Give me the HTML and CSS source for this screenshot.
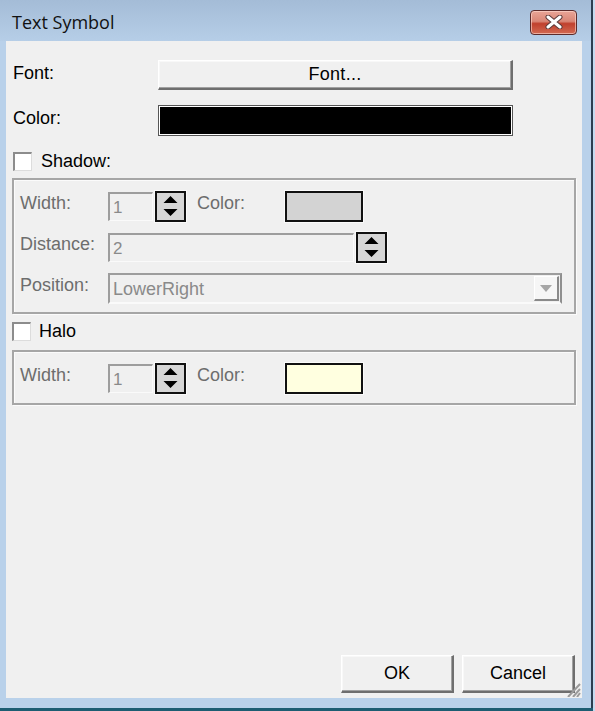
FILE: index.html
```html
<!DOCTYPE html>
<html>
<head>
<meta charset="utf-8">
<title>Text Symbol</title>
<link rel="stylesheet" href="styles.css">
</head>
<body>
<div class="window">
  <div class="titlebar">
    <span class="title">Text Symbol</span>
    <button class="close" aria-label="Close">
      <svg width="20" height="14" viewBox="0 0 20 14">
        <path d="M4 2 L16 12 M16 2 L4 12" stroke="#5a3a3a" stroke-width="5" stroke-linecap="round"/>
        <path d="M4 2 L16 12 M16 2 L4 12" stroke="#ffffff" stroke-width="3" stroke-linecap="round"/>
      </svg>
    </button>
  </div>
  <div class="frame">
    <div class="client">
      <div class="toprows">
        <span class="lbl">Font:</span>
        <button class="btn fontbtn">Font...</button>
        <span class="lbl">Color:</span>
        <div class="colorbox"></div>
      </div>

      <div class="check shadow-check"><span class="cb"></span><span>Shadow:</span></div>

      <div class="group g1">
        <div class="grow">
          <span class="glbl">Width:</span>
          <div class="input small">1</div>
          <div class="spin">
            <svg width="31" height="31" viewBox="0 0 31 31"><path d="M8.5 12 L15.5 5 L22.5 12 Z M8.5 18 L22.5 18 L15.5 25 Z" fill="#000"/></svg>
          </div>
          <span class="glbl clr">Color:</span>
          <div class="swatch grey"></div>
        </div>
        <div class="grow">
          <span class="glbl">Distance:</span>
          <div class="input wide">2</div>
          <div class="spin">
            <svg width="31" height="31" viewBox="0 0 31 31"><path d="M8.5 12 L15.5 5 L22.5 12 Z M8.5 18 L22.5 18 L15.5 25 Z" fill="#000"/></svg>
          </div>
        </div>
        <div class="grow">
          <span class="glbl">Position:</span>
          <div class="combo">
            <span class="combo-text">LowerRight</span>
            <span class="drop">
              <svg width="12" height="7" viewBox="0 0 12 7"><path d="M0 0 L12 0 L6 7 Z" fill="#a6a6a6"/></svg>
            </span>
          </div>
        </div>
      </div>

      <div class="check halo-check"><span class="cb"></span><span>Halo</span></div>

      <div class="group g2">
        <div class="grow">
          <span class="glbl">Width:</span>
          <div class="input small">1</div>
          <div class="spin">
            <svg width="31" height="31" viewBox="0 0 31 31"><path d="M8.5 12 L15.5 5 L22.5 12 Z M8.5 18 L22.5 18 L15.5 25 Z" fill="#000"/></svg>
          </div>
          <span class="glbl clr">Color:</span>
          <div class="swatch yellow"></div>
        </div>
      </div>

      <div class="spacer"></div>

      <div class="buttons">
        <button class="btn dlgbtn">OK</button>
        <button class="btn dlgbtn">Cancel</button>
      </div>

      <svg class="grip" width="20" height="18" viewBox="0 0 20 18">
        <path d="M19 5 L7 18 M19 10 L12 18 M19 14 L16 18" stroke="#9a9a9a" stroke-width="2"/>
      </svg>
    </div>
  </div>
</div>
</body>
</html>
```

FILE: styles.css
```css
* { box-sizing: border-box; }

html, body {
  margin: 0;
  padding: 0;
  width: 595px;
  height: 711px;
  overflow: hidden;
  background: #c6dbef;
}

.window {
  width: 593px;
  height: 708px;
  display: flex;
  flex-direction: column;
  background: #b9d1ea;
  border-right: 2px solid #2c3e50;
  font-family: "Liberation Sans", Arial, sans-serif;
  font-size: 18px;
  color: #000;
  box-shadow: 0 3px 0 #1d5d72;
}

.titlebar {
  height: 41px;
  flex: none;
  display: flex;
  align-items: center;
  justify-content: space-between;
  padding: 0 14px 0 12px;
  background: linear-gradient(#a4bcd7, #b6cee7);
}

.title {
  font-family: "Open Sans", "Noto Sans", sans-serif;
  font-size: 18px;
  color: #111;
  margin-top: 3px;
}

.close {
  width: 47px;
  height: 25px;
  margin-top: 3px;
  padding: 0;
  border: 1px solid #5b2b2b;
  border-radius: 4px;
  background: linear-gradient(#e9a597 0%, #d98676 45%, #c0402d 55%, #d26a52 100%);
  box-shadow: inset 0 0 0 1px rgba(255, 220, 210, 0.6);
  display: flex;
  align-items: center;
  justify-content: center;
}

.frame {
  flex: 1;
  display: flex;
  padding: 0 9px 10px 6px;
}

.client {
  position: relative;
  flex: 1;
  display: flex;
  flex-direction: column;
  background: #f0f0f0;
  padding: 19px 6px 5px 6px;
}

.toprows {
  display: grid;
  grid-template-columns: 145px 355px;
  grid-template-rows: 30px 31px;
  row-gap: 15px;
  align-items: center;
  padding-left: 1px;
}

.lbl {
  align-self: start;
  padding-top: 3px;
}

.btn {
  font-family: "Liberation Sans", Arial, sans-serif;
  font-size: 18px;
  color: #000;
  background: #f0f0f0;
  border-style: solid;
  border-width: 1px 2px 2px 1px;
  border-color: #ffffff #6e6e6e #6e6e6e #ffffff;
  box-shadow: inset -1px -1px 0 #a0a0a0, inset 1px 1px 0 #f8f8f8;
  padding: 0;
}

.fontbtn {
  height: 30px;
  width: 355px;
  letter-spacing: 0.3px;
}

.colorbox {
  width: 355px;
  height: 31px;
  background: #000;
  border: 1px solid #555;
  box-shadow: inset 0 0 0 1px #ffffff;
}

.check {
  display: flex;
  align-items: center;
  gap: 9px;
}

.shadow-check {
  margin-top: 15px;
  padding-left: 1px;
}

.halo-check {
  margin-top: 7px;
  gap: 8px;
}

.cb {
  width: 19px;
  height: 19px;
  background: #fff;
  border-style: solid;
  border-width: 2px 1px 1px 2px;
  border-color: #8c8c8c #dcdcdc #dcdcdc #8c8c8c;
}

.group {
  border: 2px solid #a6a6a6;
  box-shadow: inset 1px 1px 0 #fbfbfb, 1px 1px 0 #fbfbfb;
  display: flex;
  flex-direction: column;
  padding: 11px 0 8px 6px;
  gap: 10px;
  width: 564px;
}

.g1 { margin-top: 6px; }
.g2 { margin-top: 8px; padding-top: 11px; padding-bottom: 9px; }

.grow {
  display: flex;
  align-items: center;
  height: 31px;
}

.glbl {
  color: #6d6d6d;
  width: 88px;
  flex: none;
  margin-top: -6px;
}

.glbl.clr {
  width: 88px;
  margin-left: 11px;
}

.input {
  height: 29px;
  color: #8a8a8a;
  border-style: solid;
  border-width: 2px 1px 1px 2px;
  border-color: #9d9d9d #fafafa #fafafa #9d9d9d;
  background: #f0f0f0;
  padding: 4px 0 0 3px;
  font-size: 17px;
}

.input.small { width: 45px; }
.input.wide { width: 246px; }

.spin {
  width: 31px;
  height: 31px;
  margin-left: 2px;
  border: 2px solid #111;
  background: #d6d6d6;
  box-shadow: 0 0 0 1px #fafafa;
  display: flex;
  align-items: center;
  justify-content: center;
  overflow: hidden;
}

.spin svg {
  flex: none;
}

.swatch {
  width: 78px;
  height: 31px;
  border: 2px solid #111;
  box-shadow: 0 0 0 1px #fbfbfb;
}

.swatch.grey { background: #d3d3d3; }
.swatch.yellow { background: #ffffe0; }

.combo {
  width: 454px;
  height: 31px;
  border-style: solid;
  border-width: 2px 2px 2px 2px;
  border-color: #9d9d9d #8f8f8f #fafafa #9d9d9d;
  background: #f0f0f0;
  display: flex;
  align-items: center;
  justify-content: space-between;
  padding-left: 3px;
  padding-right: 1px;
}

.combo-text {
  color: #8a8a8a;
  font-size: 18px;
  margin-top: 2px;
}

.drop {
  width: 25px;
  height: 25px;
  background: #f6f6f6;
  border-style: solid;
  border-width: 1px 2px 2px 1px;
  border-color: #ffffff #8a8a8a #8a8a8a #ffffff;
  display: flex;
  align-items: center;
  justify-content: center;
}

.spacer { flex: 1; }

.buttons {
  display: flex;
  justify-content: flex-end;
  gap: 8px;
  padding-right: 1px;
}

.dlgbtn {
  width: 113px;
  height: 38px;
}

.grip {
  position: absolute;
  right: 1px;
  bottom: 1px;
}
```
